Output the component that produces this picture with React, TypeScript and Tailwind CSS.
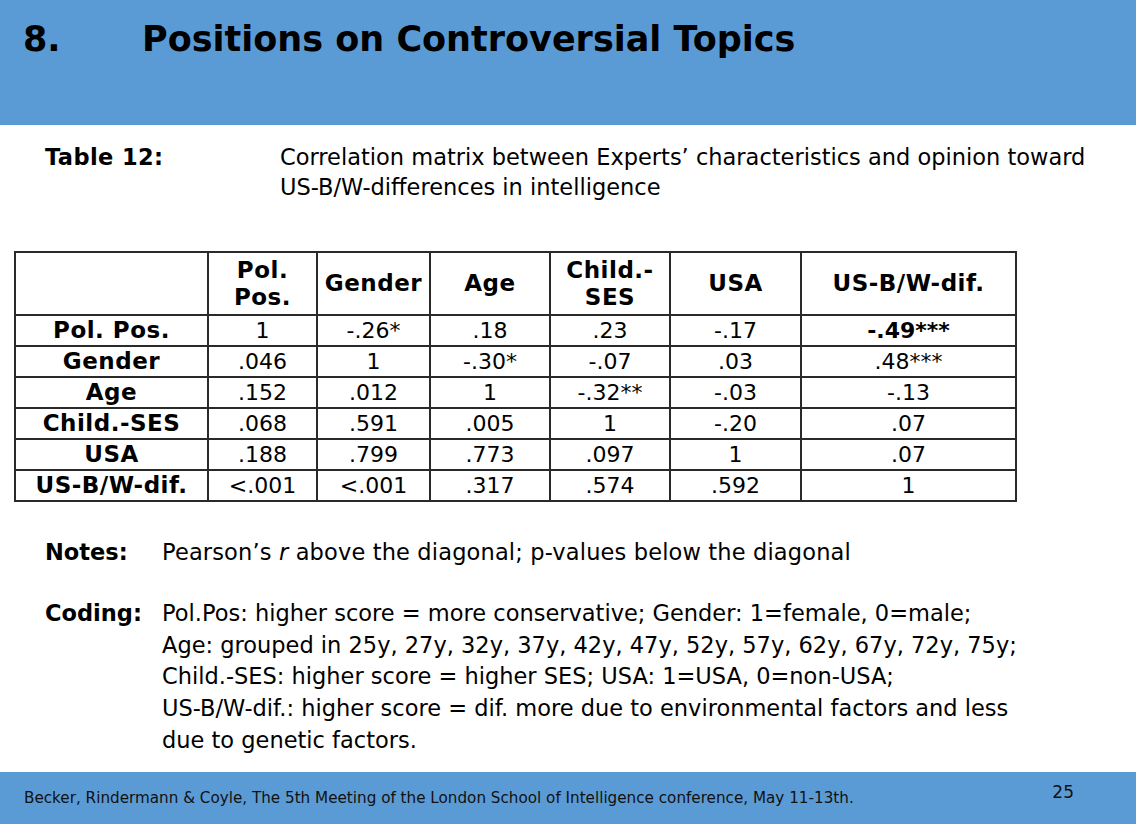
const font = { fontFamily: '"DejaVu Sans", Verdana, sans-serif' };

const cols = [193, 109, 113, 120, 120, 131, 215];

const header = [["", ""], ["Pol.", "Pos."], ["Gender"], ["Age"], ["Child.-", "SES"], ["USA"], ["US-B/W-dif."]];

const rows: string[][] = [
  ["Pol. Pos.", "1", "-.26*", ".18", ".23", "-.17", "-.49***"],
  ["Gender", ".046", "1", "-.30*", "-.07", ".03", ".48***"],
  ["Age", ".152", ".012", "1", "-.32**", "-.03", "-.13"],
  ["Child.-SES", ".068", ".591", ".005", "1", "-.20", ".07"],
  ["USA", ".188", ".799", ".773", ".097", "1", ".07"],
  ["US-B/W-dif.", "<.001", "<.001", ".317", ".574", ".592", "1"],
];

export default function App() {
  return (
    <div className="w-[1136px] h-[824px] bg-white flex flex-col text-black overflow-hidden" style={font}>
      <div className="h-[125px] bg-[#5b9bd5] flex items-start pt-[17px] pl-[23px] text-[35px] font-bold leading-[44px]">
        <span className="w-[119px]">8.</span>
        <span>Positions on Controversial Topics</span>
      </div>

      <div className="flex pl-[45px] pt-[17px] text-[22.5px] leading-[30px]">
        <span className="w-[235px] font-bold tracking-[0.4px]">Table 12:</span>
        <span>
          Correlation matrix between Experts’ characteristics and opinion toward
          <br />
          US-B/W-differences in intelligence
        </span>
      </div>

      <div className="pl-[14px] pt-[49px]">
        <table className="border-collapse text-[22px]">
          <colgroup>
            {cols.map((w, i) => (
              <col key={i} style={{ width: w }} />
            ))}
          </colgroup>
          <thead>
            <tr className="h-[63px]">
              {header.map((h, i) => (
                <th key={i} className="border-2 border-[#2a2a2a] font-bold text-[23px] tracking-[0.5px] leading-[27px] text-center p-0">
                  {h.map((l, j) => (
                    <div key={j}>{l}</div>
                  ))}
                </th>
              ))}
            </tr>
          </thead>
          <tbody>
            {rows.map((r, i) => (
              <tr key={i} className="h-[31px]">
                {r.map((c, j) => (
                  <td
                    key={j}
                    className={
                      "border-2 border-[#2a2a2a] text-center p-0 leading-[27px] " +
                      (j === 0 ? "font-bold text-[23px] tracking-[0.5px]" : i === 0 && j === 6 ? "font-bold" : "")
                    }
                  >
                    {c}
                  </td>
                ))}
              </tr>
            ))}
          </tbody>
        </table>
      </div>

      <div className="flex pl-[45px] pt-[34px] text-[22.5px] leading-[32px]">
        <span className="w-[117px] font-bold">Notes:</span>
        <span className="tracking-[0.15px]">
          Pearson’s <i>r</i> above the diagonal; p-values below the diagonal
        </span>
      </div>

      <div className="flex pl-[45px] pt-[30px] text-[22.5px] leading-[31.7px]">
        <span className="w-[117px] font-bold">Coding:</span>
        <span>
          Pol.Pos: higher score = more conservative; Gender: 1=female, 0=male;
          <br />
          Age: grouped in 25y, 27y, 32y, 37y, 42y, 47y, 52y, 57y, 62y, 67y, 72y, 75y;
          <br />
          Child.-SES: higher score = higher SES; USA: 1=USA, 0=non-USA;
          <br />
          US-B/W-dif.: higher score = dif. more due to environmental factors and less
          <br />
          due to genetic factors.
        </span>
      </div>

      <div className="mt-auto h-[52px] bg-[#5b9bd5] flex justify-between pl-[24px] pr-[62px] text-[15.2px] text-[#111]">
        <span className="pt-[15px]">
          Becker, Rindermann &amp; Coyle, The 5th Meeting of the London School of Intelligence conference, May 11-13th.
        </span>
        <span className="pt-[8px] text-[17px]">25</span>
      </div>
    </div>
  );
}
